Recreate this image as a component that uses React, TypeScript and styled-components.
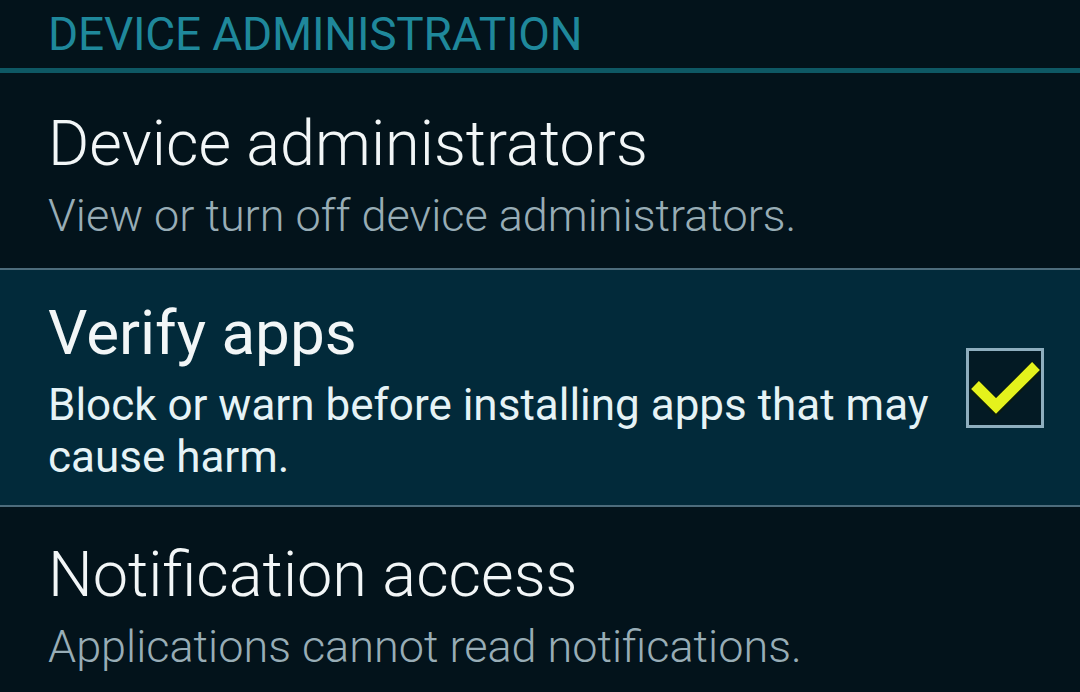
import React from "react";
import styled, { createGlobalStyle } from "styled-components";

const Global = createGlobalStyle`
  html, body { margin: 0; padding: 0; background: #03131b; }
  body { font-family: Roboto, "Noto Sans", sans-serif; overflow: hidden; }
`;

const Screen = styled.div`
  width: 1080px;
  height: 692px;
  background: #03131b;
  display: flex;
  flex-direction: column;
  overflow: hidden;
`;

const SectionHeader = styled.div`
  height: 73px;
  flex: none;
  box-sizing: border-box;
  padding: 1px 0 0 48px;
  border-bottom: 5px solid #0e5864;
  color: #1f889b;
  font-size: 46px;
  font-weight: 400;
  line-height: 66px;
  letter-spacing: -0.2px;
`;

const Row = styled.div<{ $active?: boolean; $height: number }>`
  height: ${(p) => p.$height}px;
  flex: none;
  box-sizing: border-box;
  background: ${(p) => (p.$active ? "#022a3a" : "#03131b")};
  display: flex;
  align-items: flex-start;
  padding: 0 36px 0 48px;
  gap: 24px;
`;

const Divider = styled.div`
  height: 2px;
  background: #4d6c7c;
  flex: none;
`;

const TextCol = styled.div<{ $top: number }>`
  flex: 1;
  display: flex;
  flex-direction: column;
  padding-top: ${(p) => p.$top}px;
`;

const Title = styled.div<{ $bold?: boolean }>`
  color: #f2f6f7;
  font-size: ${(p) => (p.$bold ? 62 : 63)}px;
  font-weight: ${(p) => (p.$bold ? 400 : 300)};
  line-height: 70px;
`;

const Subtitle = styled.div<{ $bright?: boolean }>`
  color: ${(p) => (p.$bright ? "#e6f3f6" : "#98adb6")};
  font-size: ${(p) => (p.$bright ? 44 : 45)}px;
  font-weight: ${(p) => (p.$bright ? 400 : 300)};
  line-height: 52px;
  margin-top: 11px;
`;

const CheckBox = styled.div`
  align-self: center;
  width: 78px;
  height: 80px;
  box-sizing: border-box;
  border: 3px solid #8eaebe;
  background: #031a24;
  display: flex;
  flex: none;
`;

export default function App() {
  return (
    <Screen>
      <Global />
      <SectionHeader>DEVICE ADMINISTRATION</SectionHeader>
      <Row $height={195}>
        <TextCol $top={36}>
          <Title>Device administrators</Title>
          <Subtitle>View or turn off device administrators.</Subtitle>
        </TextCol>
      </Row>
      <Divider />
      <Row $active $height={235}>
        <TextCol $top={28}>
          <Title $bold>Verify apps</Title>
          <Subtitle $bright>Block or warn before installing apps that may cause harm.</Subtitle>
        </TextCol>
        <CheckBox>
          <svg width="72" height="74" viewBox="0 0 72 74">
            <path d="M5 34 L27 56 L68 15" fill="none" stroke="#0a1a10" strokeWidth="14" strokeLinejoin="miter" />
            <path d="M6 34 L27 55 L67 15" fill="none" stroke="#e4f21c" strokeWidth="11" strokeLinejoin="miter" />
          </svg>
        </CheckBox>
      </Row>
      <Divider />
      <Row $height={190}>
        <TextCol $top={33}>
          <Title>Notification access</Title>
          <Subtitle>Applications cannot read notifications.</Subtitle>
        </TextCol>
      </Row>
    </Screen>
  );
}
